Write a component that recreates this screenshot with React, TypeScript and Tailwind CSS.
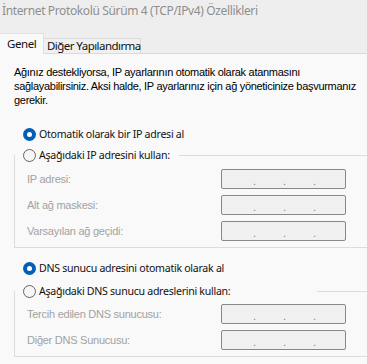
import React from "react";

function Radio({ checked }: { checked?: boolean }) {
  return checked ? (
    <span className="w-[13px] h-[13px] rounded-full bg-[#005fb8] flex items-center justify-center shrink-0">
      <span className="w-[5px] h-[5px] rounded-full bg-white" />
    </span>
  ) : (
    <span className="w-[13px] h-[13px] rounded-full border border-[#626262] bg-[#f6f6f6] shrink-0" />
  );
}

function RadioLabel({ checked, text }: { checked?: boolean; text: string }) {
  return (
    <div className="flex items-center h-full gap-[3px]">
      <Radio checked={checked} />
      <span className="text-[10.6px] leading-[16px] tracking-[-0.28px] font-['Noto_Sans',sans-serif] text-[#111] whitespace-nowrap">
        {text}
      </span>
    </div>
  );
}

function IpBox() {
  return (
    <div className="w-[125px] h-[20px] border border-[#888888] rounded-[2px] bg-[#f0f0f0] flex items-center pl-[31px] text-[11px] leading-[12px] pt-[4px] font-['Liberation_Sans',sans-serif] text-[#7f7fa0]">
      <span className="w-[30px]">.</span>
      <span className="w-[30px]">.</span>
      <span className="w-[30px]">.</span>
    </div>
  );
}

function Row({ label }: { label: string }) {
  return (
    <div className="flex items-center h-[20px]">
      <span className="w-[194px] text-[11px] leading-[14px] tracking-[-0.25px] font-['Liberation_Sans',sans-serif] text-[#a2a2a2] whitespace-nowrap">
        {label}
      </span>
      <IpBox />
    </div>
  );
}

export default function App() {
  return (
    <div className="w-[367px] h-[364px] bg-[#f9f9f9] overflow-hidden">
      <div className="h-[54px] bg-[#eeeeee] border-b border-[#dadada] flex flex-col justify-between">
        <div className="pt-[3px] pl-[2px] h-[19px] text-[12px] leading-[16px] tracking-[-0.37px] font-['Noto_Sans',sans-serif] text-[#8e8e8e] whitespace-nowrap">
          İnternet Protokolü Sürüm 4 (TCP/IPv4) Özellikleri
        </div>
        <div className="flex items-end -mb-px">
          <div className="w-[44px] h-[21px] bg-[#f9f9f9] border-t border-r border-[#e0e0e0] pl-[7px] flex items-center text-[11.5px] leading-[14px] tracking-[-0.4px] font-['Noto_Sans',sans-serif] text-[#111]">
            Genel
          </div>
          <div className="w-[97px] h-[16px] bg-[#f0f0f0] border-t border-r border-b border-[#dadada] pl-[3px] flex items-center text-[11.5px] leading-[14px] tracking-[-0.55px] font-['Noto_Sans',sans-serif] text-[#111] whitespace-nowrap">
            Diğer Yapılandırma
          </div>
        </div>
      </div>

      <p className="mt-[11px] pl-[14px] text-[11px] leading-[14px] tracking-[-0.3px] font-['Liberation_Sans',sans-serif] text-black whitespace-nowrap">
        Ağınız destekliyorsa, IP ayarlarının otomatik olarak atanmasını
        <br />
        sağlayabilirsiniz. Aksi halde, IP ayarlarınız için ağ yöneticinize başvurmanız
        <br />
        gerekir.
      </p>

      <div className="mt-[18px] h-[18px] pl-[23px]">
        <RadioLabel checked text="Otomatik olarak bir IP adresi al" />
      </div>

      <fieldset className="mt-[2px] ml-[14px] w-[370px] border border-[#dcdcdc] p-0 m-0">
        <legend className="h-[20px] w-[164px] pl-[8px] p-0 bg-[#f9f9f9]">
          <RadioLabel text="Aşağıdaki IP adresini kullan:" />
        </legend>
        <div className="pt-[4px] pb-[6px] pl-[12px] flex flex-col gap-[6px]">
          <Row label="IP adresi:" />
          <Row label="Alt ağ maskesi:" />
          <Row label="Varsayılan ağ geçidi:" />
        </div>
      </fieldset>

      <div className="mt-[11px] h-[18px] pl-[23px]">
        <RadioLabel checked text="DNS sunucu adresini otomatik olarak al" />
      </div>

      <fieldset className="mt-[4px] ml-[14px] w-[370px] border border-[#dcdcdc] p-0 m-0">
        <legend className="h-[20px] w-[302px] pl-[8px] p-0 bg-[#f9f9f9]">
          <RadioLabel text="Aşağıdaki DNS sunucu adreslerini kullan:" />
        </legend>
        <div className="pt-[3px] pb-[6px] pl-[12px] flex flex-col gap-[6px]">
          <Row label="Tercih edilen DNS sunucusu:" />
          <Row label="Diğer DNS Sunucusu:" />
        </div>
      </fieldset>
    </div>
  );
}
